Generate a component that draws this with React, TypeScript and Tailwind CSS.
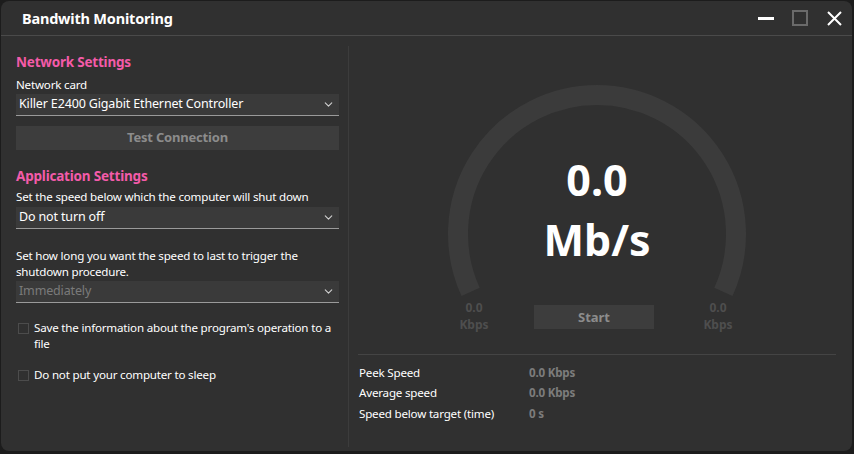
import { ChevronDown } from 'lucide-react'

const font = { fontFamily: '"Noto Sans", "Open Sans", sans-serif' }

function Select({ value, muted }: { value: string; muted?: boolean }) {
  return (
    <div className="flex h-[22px] items-center justify-between border-b border-[#9a9a9a] bg-[#3a3a3a] pl-[3px] pr-[4px]">
      <span className={`text-[12.5px] leading-none tracking-[-0.15px] ${muted ? 'text-[#7a7a7a]' : 'text-white'}`}>{value}</span>
      <ChevronDown size={13} strokeWidth={2} className="text-[#d0d0d0]" />
    </div>
  )
}

function Check({ label }: { label: string }) {
  return (
    <div className="flex items-start gap-[5px]">
      <div className="mt-[3px] h-[11px] w-[11px] shrink-0 border border-[#4c4c4c]" />
      <span className="text-[11.6px] leading-[16px] tracking-[-0.2px] text-white">{label}</span>
    </div>
  )
}

function Gauge() {
  return (
    <div className="relative mx-auto mt-[38px] h-[262px] w-[320px]">
      <svg className="absolute left-0 top-0" width="320" height="262" viewBox="0 0 320 262">
        <path
          d="M 33.6 217.9 A 139 139 0 1 1 286.4 217.9"
          fill="none"
          stroke="#3b3b3b"
          strokeWidth="20"
        />
      </svg>
      <div className="relative flex flex-col items-center pt-[76px] text-[43px] font-bold leading-[60px] text-white">
        <span>0.0</span>
        <span>Mb/s</span>
      </div>
      <div className="relative mt-[29px] flex items-start text-[12px] font-bold leading-[17px] text-[#4e4e4e]">
        <div className="flex w-[74px] flex-col items-center">
          <span>0.0</span>
          <span>Kbps</span>
        </div>
        <div className="ml-[23px] mt-[6px] flex h-[24px] w-[120px] items-center justify-center bg-[#3d3d3d] text-[13px] text-[#8c8c8c]">
          Start
        </div>
        <div className="ml-[28px] flex w-[72px] flex-col items-center">
          <span>0.0</span>
          <span>Kbps</span>
        </div>
      </div>
    </div>
  )
}

function Stat({ label, value }: { label: string; value: string }) {
  return (
    <div className="flex h-[20.5px] items-center text-[11.6px] tracking-[-0.2px]">
      <span className="w-[170px] text-white">{label}</span>
      <span className="font-bold text-[#7c7c7c]">{value}</span>
    </div>
  )
}

export default function App() {
  return (
    <div className="h-[454px] w-[854px] bg-[#1c1c1c] p-[1px]" style={font}>
      <div className="flex h-[450px] w-[851px] flex-col overflow-hidden rounded-[8px] bg-[#303030]">
        {/* title bar */}
        <div className="flex h-[35px] shrink-0 items-center border-b border-[#4a4a4a] pl-[21px] pr-[10px]">
          <span className="mt-[1px] text-[14.5px] font-bold tracking-[-0.2px] text-white">Bandwith Monitoring</span>
          <div className="ml-auto flex items-center">
            <div className="h-[3px] w-[16px] bg-white" />
            <div className="ml-[18px] h-[16px] w-[16px] border-2 border-[#6a6a6a]" />
            <svg className="ml-[19px]" width="15" height="15" viewBox="0 0 15 15">
              <path d="M1 1 L14 14 M14 1 L1 14" stroke="white" strokeWidth="2" />
            </svg>
          </div>
        </div>

        <div className="flex min-h-0 flex-1">
          {/* left: settings */}
          <div className="w-[347px] shrink-0 pb-[4px] pl-[15px] pr-[9px] pt-[10px]">
            <div className="flex h-[404px] flex-col">
              <div className="mt-[7px] text-[13.5px] font-bold leading-[18px] tracking-[-0.2px] text-[#f45ba9]">Network Settings</div>
              <div className="mt-[6px] text-[11.6px] leading-[16px] tracking-[-0.2px] text-white">Network card</div>
              <div className="mt-[1px]">
                <Select value="Killer E2400 Gigabit Ethernet Controller" />
              </div>
              <div className="mt-[10px] flex h-[24px] items-center justify-center bg-[#3d3d3d] text-[13px] font-bold tracking-[-0.2px] text-[#8c8c8c]">
                Test Connection
              </div>
              <div className="mt-[17px] text-[13.5px] font-bold leading-[18px] tracking-[-0.2px] text-[#f45ba9]">Application Settings</div>
              <div className="mt-[4px] text-[11.6px] leading-[16px] tracking-[-0.2px] text-white">Set the speed below which the computer will shut down</div>
              <div className="mt-[2px]">
                <Select value="Do not turn off" />
              </div>
              <div className="mt-[19px] text-[11.6px] leading-[16px] tracking-[-0.2px] text-white">
                Set how long you want the speed to last to trigger the shutdown procedure.
              </div>
              <div className="mt-[1px]">
                <Select value="Immediately" muted />
              </div>
              <div className="mt-[17px] flex flex-col gap-[15px] pl-[2px]">
                <Check label="Save the information about the program's operation to a file" />
                <Check label="Do not put your computer to sleep" />
              </div>
            </div>
          </div>

          {/* divider */}
          <div className="mb-[4px] mt-[10px] w-px shrink-0 bg-[#3c3c3c]" />

          {/* right: gauge */}
          <div className="flex flex-1 flex-col pl-[9px] pr-[16px]">
            <Gauge />
            <div className="mt-[18px] border-t border-[#444444]" />
            <div className="mt-[7px] flex flex-col pl-[1px]">
              <Stat label="Peek Speed" value="0.0 Kbps" />
              <Stat label="Average speed" value="0.0 Kbps" />
              <Stat label="Speed below target (time)" value="0 s" />
            </div>
          </div>
        </div>
      </div>
    </div>
  )
}
